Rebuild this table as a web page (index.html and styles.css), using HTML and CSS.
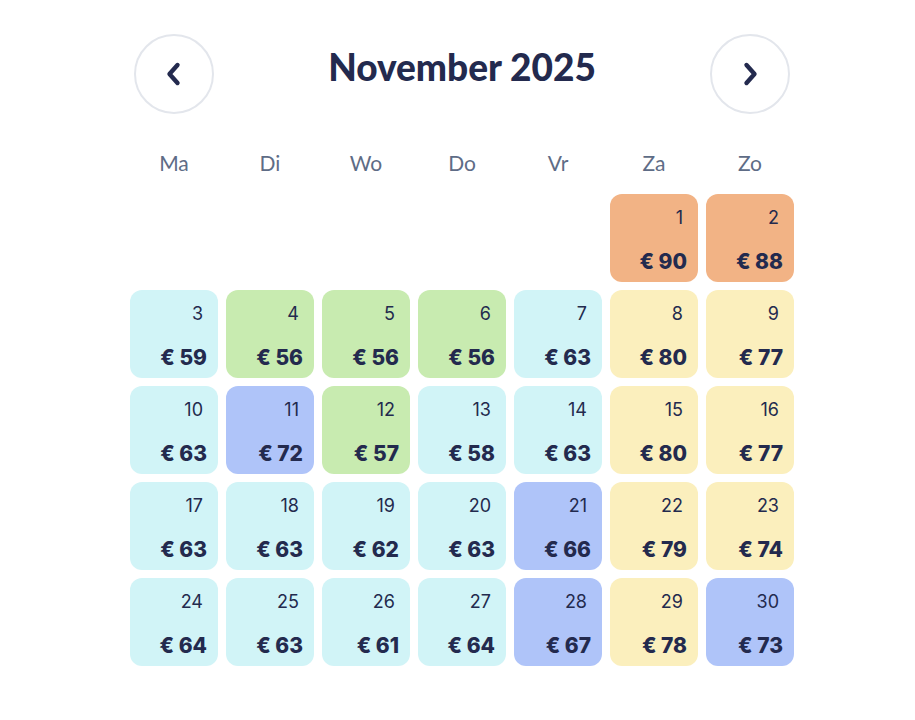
FILE: index.html
```html
<!DOCTYPE html>
<html lang="nl">
<head>
<meta charset="utf-8">
<link rel="stylesheet" href="styles.css">
</head>
<body>
<div class="cal">
  <div class="head">
    <button class="nav" aria-label="Vorige">
      <svg width="24" height="28" viewBox="0 0 24 28"><path d="M15.5 5 L7.5 14 L15.5 23" fill="none" stroke="#232a4e" stroke-width="4.4" stroke-linecap="round" stroke-linejoin="round"/></svg>
    </button>
    <h1 class="title">November 2025</h1>
    <button class="nav" aria-label="Volgende">
      <svg width="24" height="28" viewBox="0 0 24 28"><path d="M8.5 5 L16.5 14 L8.5 23" fill="none" stroke="#232a4e" stroke-width="4.4" stroke-linecap="round" stroke-linejoin="round"/></svg>
    </button>
  </div>
  <div class="wd">
    <span>Ma</span><span>Di</span><span>Wo</span><span>Do</span><span>Vr</span><span>Za</span><span>Zo</span>
  </div>
  <div class="grid">
    <div class="empty"></div><div class="empty"></div><div class="empty"></div><div class="empty"></div><div class="empty"></div>
    <div class="day o"><span class="n">1</span><span class="p">€ 90</span></div>
    <div class="day o"><span class="n">2</span><span class="p">€ 88</span></div>

    <div class="day c"><span class="n">3</span><span class="p">€ 59</span></div>
    <div class="day g"><span class="n">4</span><span class="p">€ 56</span></div>
    <div class="day g"><span class="n">5</span><span class="p">€ 56</span></div>
    <div class="day g"><span class="n">6</span><span class="p">€ 56</span></div>
    <div class="day c"><span class="n">7</span><span class="p">€ 63</span></div>
    <div class="day y"><span class="n">8</span><span class="p">€ 80</span></div>
    <div class="day y"><span class="n">9</span><span class="p">€ 77</span></div>

    <div class="day c"><span class="n">10</span><span class="p">€ 63</span></div>
    <div class="day b"><span class="n">11</span><span class="p">€ 72</span></div>
    <div class="day g"><span class="n">12</span><span class="p">€ 57</span></div>
    <div class="day c"><span class="n">13</span><span class="p">€ 58</span></div>
    <div class="day c"><span class="n">14</span><span class="p">€ 63</span></div>
    <div class="day y"><span class="n">15</span><span class="p">€ 80</span></div>
    <div class="day y"><span class="n">16</span><span class="p">€ 77</span></div>

    <div class="day c"><span class="n">17</span><span class="p">€ 63</span></div>
    <div class="day c"><span class="n">18</span><span class="p">€ 63</span></div>
    <div class="day c"><span class="n">19</span><span class="p">€ 62</span></div>
    <div class="day c"><span class="n">20</span><span class="p">€ 63</span></div>
    <div class="day b"><span class="n">21</span><span class="p">€ 66</span></div>
    <div class="day y"><span class="n">22</span><span class="p">€ 79</span></div>
    <div class="day y"><span class="n">23</span><span class="p">€ 74</span></div>

    <div class="day c"><span class="n">24</span><span class="p">€ 64</span></div>
    <div class="day c"><span class="n">25</span><span class="p">€ 63</span></div>
    <div class="day c"><span class="n">26</span><span class="p">€ 61</span></div>
    <div class="day c"><span class="n">27</span><span class="p">€ 64</span></div>
    <div class="day b"><span class="n">28</span><span class="p">€ 67</span></div>
    <div class="day y"><span class="n">29</span><span class="p">€ 78</span></div>
    <div class="day b"><span class="n">30</span><span class="p">€ 73</span></div>
  </div>
</div>
</body>
</html>
```
FILE: styles.css
```css
* { box-sizing: border-box; }
html, body { margin: 0; padding: 0; background: #fff; }
body { font-family: Inter, "Noto Sans", sans-serif; color: #232a4e; }

.cal {
  width: 664px;
  margin-left: 130px;
  padding-top: 34px;
}

.head {
  display: flex;
  align-items: flex-start;
  justify-content: space-between;
  padding: 0 4px;
  height: 80px;
}

.nav {
  width: 80px;
  height: 80px;
  border-radius: 50%;
  border: 2px solid #e3e6ec;
  background: #fff;
  display: flex;
  align-items: center;
  justify-content: center;
  padding: 0;
  cursor: pointer;
}

.title {
  margin: 13px 0 0;
  font-family: Lato, sans-serif;
  font-weight: 900;
  font-size: 37px;
  line-height: 40px;
  color: #232a4e;
}

.wd {
  display: grid;
  grid-template-columns: repeat(7, 88px);
  column-gap: 8px;
  margin-top: 37px;
  height: 24px;
  font-family: Lato, sans-serif;
  font-size: 21px;
  line-height: 24px;
  font-weight: 400;
  color: #5e6c86;
  text-align: center;
}

.grid {
  display: grid;
  grid-template-columns: repeat(7, 88px);
  grid-auto-rows: 88px;
  gap: 8px;
  margin-top: 19px;
}

.day {
  border-radius: 12px;
  display: flex;
  flex-direction: column;
  align-items: flex-end;
  justify-content: space-between;
  padding: 13px 11px 7px 10px;
}

.n {
  font-size: 18px;
  line-height: 22px;
  font-weight: 400;
  padding-right: 4px;
}

.p {
  font-size: 21px;
  line-height: 26px;
  font-weight: 800;
}

.o { background: #f2b385; }
.c { background: #d1f4f7; }
.g { background: #c8ebb0; }
.b { background: #afc4f9; }
.y { background: #fbefbd; }
```
